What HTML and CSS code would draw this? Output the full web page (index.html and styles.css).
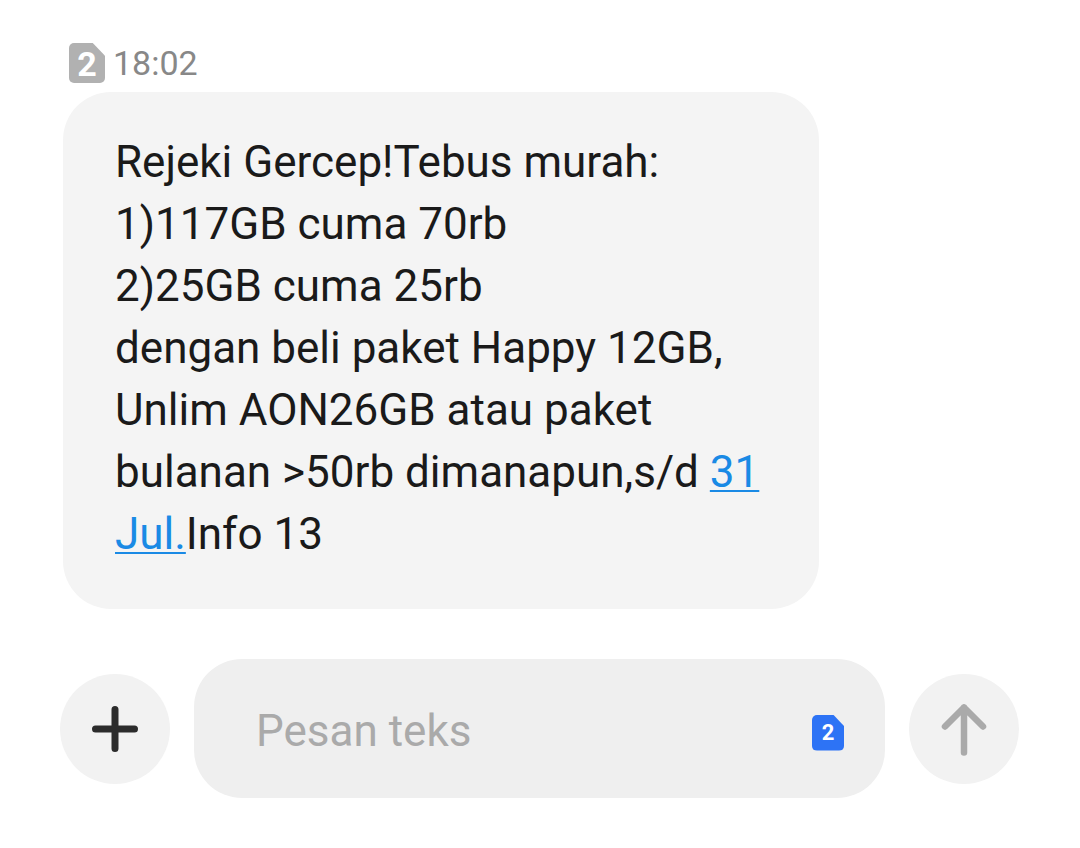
FILE: index.html
```
<!DOCTYPE html>
<html lang="id">
<head>
	<meta charset="UTF-8">
	<meta name="viewport" content="width=device-width, initial-scale=1">
	<title>Pesan</title>
	<link rel="stylesheet" href="styles.css">
</head>

<body>
	<main>
		<div class="meta">
			<span class="sim sim-gray">2</span>
			<time datetime="18:02">18:02</time>
		</div>
		<div class="bubble">
			Rejeki Gercep!Tebus murah:<br>
			1)117GB cuma 70rb<br>
			2)25GB cuma 25rb<br>
			dengan beli paket Happy 12GB, Unlim AON26GB atau paket bulanan &gt;50rb dimanapun,s/d <a href="#">31 Jul.</a>Info 13
		</div>
	</main>
	<form class="composer">
		<button type="button" class="round" aria-label="Tambah">
			<svg width="110" height="110" viewBox="0 0 110 110">
				<path d="M55 35.500v39M35.500 55h39" fill="none" stroke="#2c2c2c" stroke-width="7" stroke-linecap="round"/>
			</svg>
		</button>
		<div class="field">
			<input type="text" placeholder="Pesan teks" aria-label="Pesan teks">
			<button type="button" class="sim sim-blue" aria-label="SIM 2">2</button>
		</div>
		<button type="submit" class="round" aria-label="Kirim">
			<svg width="110" height="110" viewBox="0 0 110 110">
				<path d="M55 78.500V33.500M36 52.500l19-19 19 19" fill="none" stroke="#aaa" stroke-width="6.500" stroke-linecap="round" stroke-linejoin="round"/>
			</svg>
		</button>
	</form>
</body>
</html>
```
FILE: styles.css
```
* {
	box-sizing: border-box;
}
body {
	margin: 0;
	padding: 42px 61px 48px 60px;
	background: #fff;
	color: #1a1a1a;
	font-family: Roboto, sans-serif;
}
.meta {
	display: flex;
	align-items: center;
	gap: 8px;
	height: 42px;
	margin: 0 9px 8px;
	color: #888;
	font-size: 34px;
	line-height: 42px;
}
.bubble {
	max-width: 756px;
	margin: 0 3px;
	padding: 39px 52px 44px;
	border-radius: 48px;
	background: #f4f4f4;
	font-size: 44px;
	line-height: 62px;
}
.bubble a {
	color: #1a8ae5;
	text-decoration-thickness: 2px;
	text-underline-offset: 3px;
}
.composer {
	display: flex;
	align-items: center;
	gap: 24px;
	margin-top: 50px;
}
button {
	padding: 0;
	border: 0;
	font-family: inherit;
}
.round {
	flex: none;
	width: 110px;
	height: 110px;
	border-radius: 50%;
	background: #f2f2f2;
}
.round svg {
	display: block;
}
.field {
	display: flex;
	flex: 1;
	align-items: center;
	min-width: 0;
	height: 139px;
	padding: 8px 41px 0 62px;
	border-radius: 48px;
	background: #efefef;
}
.field input {
	flex: 1;
	min-width: 0;
	padding: 0 0 4px;
	border: 0;
	outline: none;
	background: none;
	color: #1a1a1a;
	font: 44px Roboto, sans-serif;
}
.field input::placeholder {
	color: #aaa;
	opacity: 1;
}
/* SIM card shape with the top right corner cut off */
.sim {
	flex: none;
	border-radius: 5px;
	color: #fff;
	font-weight: bold;
	text-align: center;
	clip-path: polygon(0 0, 66% 0, 100% 32%, 100% 100%, 0 100%);
}
.sim-gray {
	width: 36px;
	height: 40px;
	background: #b1b1b1;
	font-size: 34px;
	line-height: 42px;
}
.sim-blue {
	width: 32px;
	height: 36px;
	background: #2d73f5;
	font-size: 22px;
	line-height: 36px;
}
```
